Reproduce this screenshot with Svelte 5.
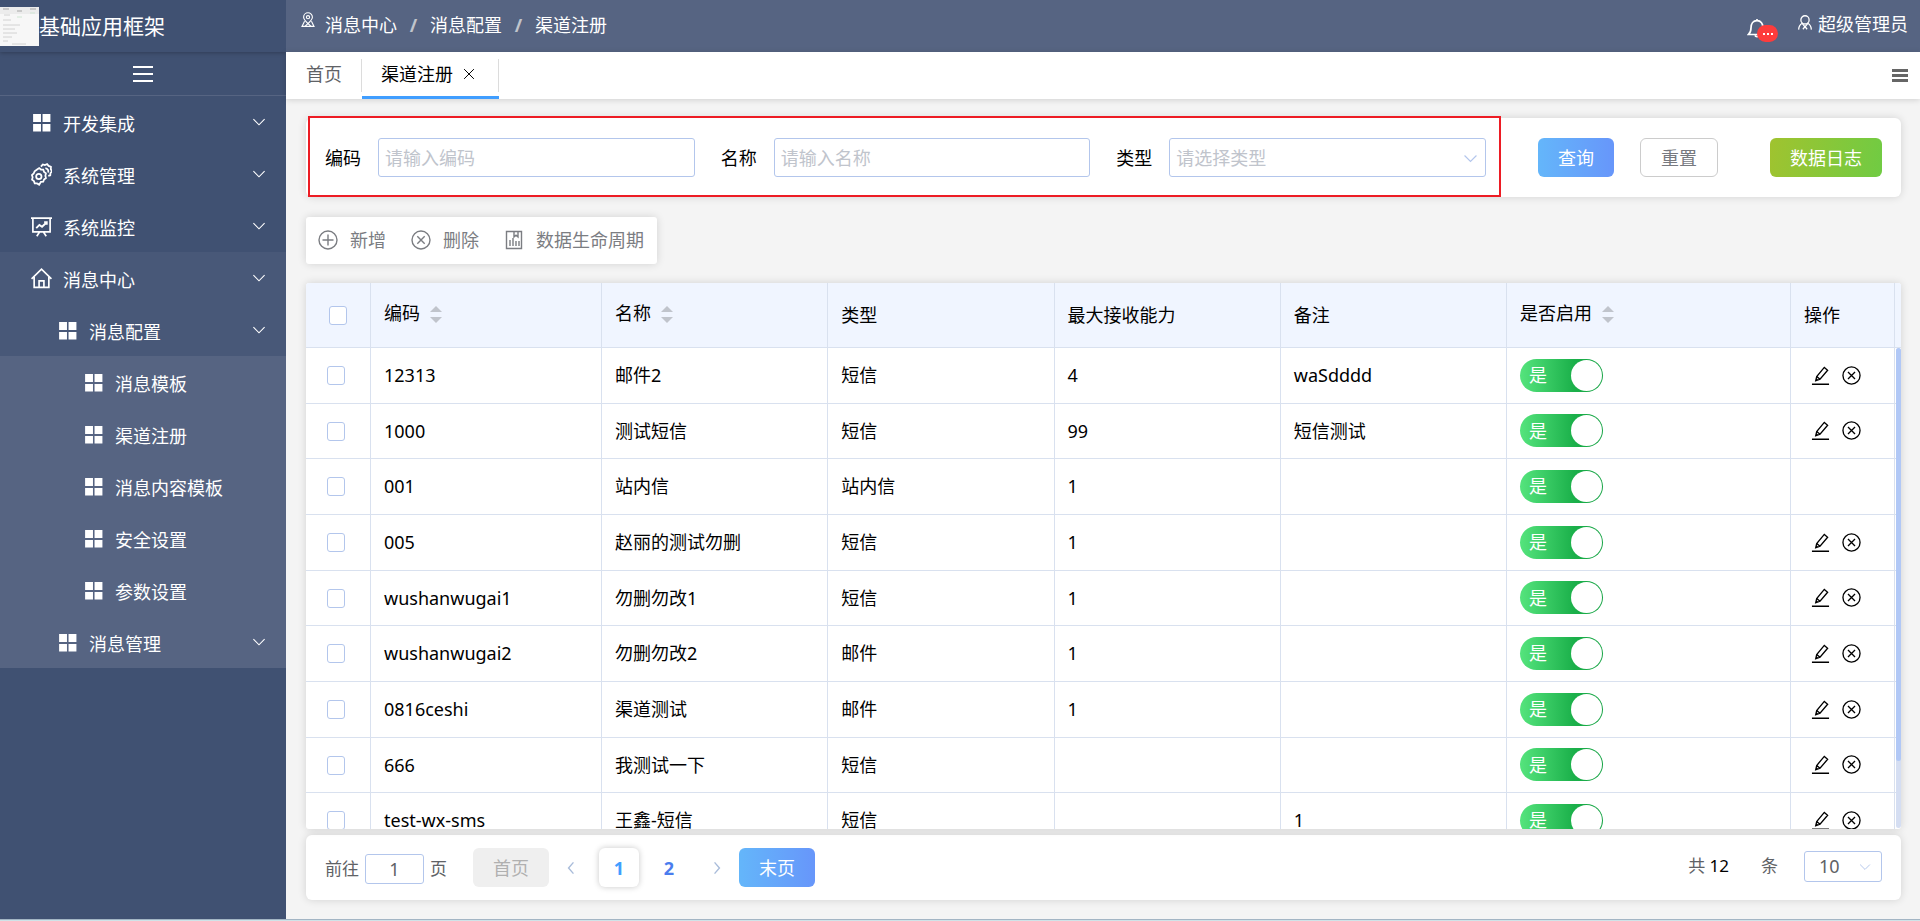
<script>
    const menus = [
        { text: '开发集成', icon: 'grid', level: 1, arrow: true },
        { text: '系统管理', icon: 'gear', level: 1, arrow: true },
        { text: '系统监控', icon: 'board', level: 1, arrow: true },
        { text: '消息中心', icon: 'home', level: 1, arrow: true, tone: 'open' },
        { text: '消息配置', icon: 'grid', level: 2, arrow: true, tone: 'open' },
        { text: '消息模板', icon: 'grid', level: 3, tone: 'sub' },
        { text: '渠道注册', icon: 'grid', level: 3, tone: 'sub' },
        { text: '消息内容模板', icon: 'grid', level: 3, tone: 'sub' },
        { text: '安全设置', icon: 'grid', level: 3, tone: 'sub' },
        { text: '参数设置', icon: 'grid', level: 3, tone: 'sub' },
        { text: '消息管理', icon: 'grid', level: 2, arrow: true, tone: 'sub' }
    ];

    let rows = $state([
        { code: '12313', name: '邮件2', type: '短信', max: '4', remark: 'waSdddd', on: true, ops: true },
        { code: '1000', name: '测试短信', type: '短信', max: '99', remark: '短信测试', on: true, ops: true },
        { code: '001', name: '站内信', type: '站内信', max: '1', remark: '', on: true, ops: false },
        { code: '005', name: '赵丽的测试勿删', type: '短信', max: '1', remark: '', on: true, ops: true },
        { code: 'wushanwugai1', name: '勿删勿改1', type: '短信', max: '1', remark: '', on: true, ops: true },
        { code: 'wushanwugai2', name: '勿删勿改2', type: '邮件', max: '1', remark: '', on: true, ops: true },
        { code: '0816ceshi', name: '渠道测试', type: '邮件', max: '1', remark: '', on: true, ops: true },
        { code: '666', name: '我测试一下', type: '短信', max: '', remark: '', on: true, ops: true },
        { code: 'test-wx-sms', name: '王鑫-短信', type: '短信', max: '', remark: '1', on: true, ops: true }
    ]);

    let query = $state({ code: '', name: '', type: '' });
    let page = $state(1);

    function reset() {
        query = { code: '', name: '', type: '' };
    }
</script>

{#snippet icon(name)}
    <svg class="icon {name}" viewBox={name === 'gear' ? '1 0.5 18 19.5' : '0 0 20 20'} fill="none" stroke="currentColor" stroke-width="1.4" aria-hidden="true">
        {#if name === 'grid'}
            <path fill="currentColor" stroke="none" d="M2 2h7.500v7.500H2zM11 2h7.500v7.500H11zM2 11.500h7.500v7H2zM11 11.500h7.500v7H11z" />
        {:else if name === 'gear'}
            <path stroke-width="1.500" d="M6.500 5.700l1.500-.9 1.500 1.200 2 .1.700 1.900 1.600 1.300-.5 2 .5 2-1.600 1.200-.7 1.900-2 .1L8 19l-1.800-1.100-2-.1-.7-1.900-1.600-1.300.5-2-.6-1.900 1.500-1.300.8-1.900z" />
            <circle cx="7.700" cy="12" r="2.300" stroke-width="1.500" />
            <path stroke-width="1.500" d="M9.500 3.500l1.600-1.900 1.800.6 1.900-.8 1.300 1.500 2 .8-.1 2 1 1.800-1.300 1.500-.2 2-1.700.5M13.300 4.800c2 .3 3 2 2.300 3.700" />
        {:else if name === 'board'}
            <path stroke-width="1.600" d="M0 2h20M1.800 2v13.200h16.400V2M8 15.500l-2.500 3.700M12 15.500l2.500 3.700" />
            <path stroke-width="1.800" d="M5 11.500l3-3 2.500 1.700L15 6M12.500 5.800H15v2.500" />
        {:else if name === 'home'}
            <path stroke-width="1.600" d="M.5 10.300L10 1.200l9.500 9.100M3 8.500v10h14v-10M7.700 18.500v-6.300h4.600v6.300" />
        {:else if name === 'down'}
            <path d="M3 6.500l7 7 7-7" />
        {:else if name === 'left'}
            <path stroke-width="2" d="M13.500 2L6.500 10l7 8" />
        {:else if name === 'right'}
            <path stroke-width="2" d="M6.500 2l7 8-7 8" />
        {:else if name === 'pin'}
            <path d="M10 14.500C6.500 11 4.500 9 4.500 6.500a5.500 5.500 0 0 1 11 0c0 2.500-2 4.500-5.500 8z" />
            <circle cx="10" cy="6.500" r="2" />
            <path d="M5.700 11.500L2.500 18h15l-3.200-6.500M6 18l4-3.500 4 3.500" />
        {:else if name === 'bell'}
            <path stroke-width="1.700" d="M10 1v1.500M1.500 16.500h17c-2-1.800-2.500-3.500-2.500-6.500 0-4.500-2-7.300-6-7.300S4 5.500 4 10c0 3-.5 4.700-2.500 6.500zM8 17.500c.5 1.500 3.500 1.500 4 0" />
        {:else if name === 'user'}
            <circle cx="10" cy="6.500" r="5.500" stroke-width="1.700" />
            <path stroke-width="1.700" d="M1.500 19.500c.3-4.500 2-7 4.700-8.500L10 16l3.800-5c2.700 1.500 4.400 4 4.700 8.500M7.200 19l2.800-3.500 2.800 3.500" />
        {:else if name === 'add'}
            <circle cx="10" cy="10" r="9" /><path d="M10 4.500v11M4.500 10h11" />
        {:else if name === 'remove'}
            <circle cx="10" cy="10" r="9" /><path d="M6.300 6.300l7.400 7.400M13.700 6.300l-7.400 7.400" />
        {:else if name === 'data'}
            <path d="M2.500 1.500h15v17h-15zM6 10v6M9 8v8M12 11v5M15 11v5M10 1.500v5.500l2-1.800 2 1.800V1.500" />
        {:else if name === 'edit'}
            <path d="M1 19.200h18M5 15.500l1-4.500L14 1.500l3.500 3-8 9.500zM6 11l3.500 3M5 15.500l1.500-2" />
        {:else if name === 'close'}
            <path d="M3 3l14 14M17 3L3 17" />
        {/if}
    </svg>
{/snippet}

{#snippet sorter(label)}
    <button class="sorter">{label}<span class="carets"><i class="up"></i><i class="dn"></i></span></button>
{/snippet}

<div class="layout">
    <div class="shell">
        <aside>
            <div class="brand">
                <svg class="logo" viewBox="0 0 39 39" aria-hidden="true">
                    <rect width="39" height="39" fill="#f7f7f7" />
                    <rect width="39" height="7" fill="#ececec" />
                    <path d="M3 2h6M17 4h5M30 2h6" stroke="#c9c9c9" stroke-width="2" />
                    <path d="M17 10h5M30 6h5" stroke="#cfe6d3" />
                    <path d="M4 8h6M3 13h8M3 18h17M3 22h12M3 26h14M3 30h9M3 34h5M12 37h14" stroke="#d2d2d2" />
                </svg>
                <span>基础应用框架</span>
            </div>
            <button class="collapse" aria-label="menu"><i></i><i></i><i></i></button>
            <nav>
                {#each menus as m}
                    <a href="#menu" class="menu level{m.level} {m.tone ?? ''}">
                        {@render icon(m.icon)}
                        <span>{m.text}</span>
                        {#if m.arrow}{@render icon('down')}{/if}
                    </a>
                {/each}
            </nav>
        </aside>

        <div class="main">
            <header>
                <div class="crumbs">
                    {@render icon('pin')}
                    <span>消息中心</span><b>/</b><span>消息配置</span><b>/</b><span>渠道注册</span>
                </div>
                <div class="account">
                    <button class="notice" aria-label="notice">{@render icon('bell')}<span class="badge"><i></i><i></i><i></i></span></button>
                    <button class="user">{@render icon('user')}超级管理员</button>
                </div>
            </header>

            <div class="tabs">
                <a href="#home" class="tab">首页</a>
                <div class="tab active">
                    <a href="#channel">渠道注册</a>
                    <button aria-label="close">{@render icon('close')}</button>
                </div>
                <button class="more" aria-label="tabs"><i></i><i></i><i></i></button>
            </div>

            <main>
                <section class="card filter">
                    <div class="fields">
                        <div class="field">
                            <label for="code">编码</label>
                            <input id="code" placeholder="请输入编码" bind:value={query.code} />
                        </div>
                        <div class="field">
                            <label for="name">名称</label>
                            <input id="name" placeholder="请输入名称" bind:value={query.name} />
                        </div>
                        <div class="field">
                            <label for="type">类型</label>
                            <div class="select">
                                <select id="type" class:empty={!query.type} bind:value={query.type}>
                                    <option value="">请选择类型</option>
                                    <option>短信</option>
                                    <option>邮件</option>
                                    <option>站内信</option>
                                </select>
                                {@render icon('down')}
                            </div>
                        </div>
                    </div>
                    <div class="actions">
                        <button class="btn primary">查询</button>
                        <button class="btn plain" onclick={reset}>重置</button>
                        <button class="btn success">数据日志</button>
                    </div>
                </section>

                <div class="card toolbar">
                    <button>{@render icon('add')}新增</button>
                    <button>{@render icon('remove')}删除</button>
                    <button>{@render icon('data')}数据生命周期</button>
                </div>

                <section class="card grid-card">
                    <table>
                        <colgroup>
                            <col class="c-check" /><col class="c-code" /><col /><col /><col /><col />
                            <col class="c-on" /><col class="c-ops" /><col class="c-gutter" />
                        </colgroup>
                        <thead>
                            <tr>
                                <th class="check"><input type="checkbox" aria-label="all" /></th>
                                <th>{@render sorter('编码')}</th>
                                <th>{@render sorter('名称')}</th>
                                <th>类型</th>
                                <th>最大接收能力</th>
                                <th>备注</th>
                                <th>{@render sorter('是否启用')}</th>
                                <th>操作</th>
                                <th class="gutter"></th>
                            </tr>
                        </thead>
                        <tbody>
                            {#each rows as row}
                                <tr>
                                    <td class="check"><input type="checkbox" aria-label={row.code} /></td>
                                    <td>{row.code}</td>
                                    <td>{row.name}</td>
                                    <td>{row.type}</td>
                                    <td>{row.max}</td>
                                    <td>{row.remark}</td>
                                    <td>
                                        <label class="switch" class:off={!row.on}>
                                            <input type="checkbox" role="switch" aria-checked={row.on} bind:checked={row.on} />
                                            <span>{row.on ? '是' : '否'}</span>
                                        </label>
                                    </td>
                                    <td>
                                        {#if row.ops}
                                            <div class="ops">
                                                <button aria-label="edit">{@render icon('edit')}</button>
                                                <button aria-label="remove">{@render icon('remove')}</button>
                                            </div>
                                        {/if}
                                    </td>
                                    <td class="gutter"></td>
                                </tr>
                            {/each}
                        </tbody>
                    </table>
                    <div class="scrollbar"><div class="thumb"></div></div>
                </section>

                <footer class="card">
                    <label class="goto">前往<input value={page} />页</label>
                    <button class="btn first" disabled>首页</button>
                    <button class="step prev" aria-label="prev">{@render icon('left')}</button>
                    <button class="page" class:current={page === 1} onclick={() => (page = 1)}>1</button>
                    <button class="page" class:current={page === 2} onclick={() => (page = 2)}>2</button>
                    <button class="step next" aria-label="next">{@render icon('right')}</button>
                    <button class="btn primary last">末页</button>
                    <div class="sizer">
                        <span>共 <em>12</em></span>
                        <label for="size">条</label>
                        <div class="select size">
                            <select id="size">
                                <option>10</option>
                                <option>20</option>
                                <option>50</option>
                            </select>
                            {@render icon('down')}
                        </div>
                    </div>
                </footer>
            </main>
        </div>
    </div>
</div>

<style>
    :global(body) { margin: 0; }

    .layout {
        min-height: 100vh; box-sizing: border-box;
        display: flex; flex-direction: column;
        border-bottom: 1px solid #cfe3e8;
        font-family: "Noto Sans", "Noto Sans CJK SC", sans-serif;
        font-size: 18px; line-height: 26px; color: #000;
    }
    .layout *, .layout *::before { box-sizing: border-box; }
    .shell { flex: 1; display: flex; border-bottom: 1px solid #a3b5c4; background: #f4f4f4; }
    button, input, select { font: inherit; color: inherit; }
    button { background: none; border: none; padding: 0; cursor: pointer; white-space: nowrap; }
    a { color: inherit; text-decoration: none; }
    .icon { width: 20px; height: 20px; flex-shrink: 0; display: block; }

    /* sidebar */
    aside { width: 286px; flex-shrink: 0; background: #405172; color: #fff; }
    .brand {
        height: 52px; display: flex; align-items: center;
        font-size: 21px; box-shadow: 0 1px 4px rgba(0, 0, 0, 0.25);
    }
    .logo { width: 39px; height: 39px; }
    .collapse {
        width: 100%; height: 44px; border-bottom: 1px solid #566482;
        display: flex; flex-direction: column; align-items: center; justify-content: center; gap: 5px;
    }
    .collapse i { width: 20px; height: 2px; background: #fff; }
    .menu {
        height: 52px; padding: 0 19px 0 31px;
        display: flex; align-items: center; gap: 11px;
    }
    .menu span { flex: 1; padding-top: 4px; }
    .menu .icon { width: 21px; height: 21px; }
    .menu .gear { height: 23px; }
    .menu .down { width: 16px; height: 16px; }
    .menu.level2 { padding-left: 57px; }
    .menu.level3 { padding-left: 83px; }
    .menu.open { background: #485878; }
    .menu.sub { background: #566482; }

    /* top bar */
    .main { flex: 1; min-width: 0; display: flex; flex-direction: column; }
    header {
        height: 52px; padding: 0 12px 0 14px; background: #566482; color: #fff;
        display: flex; align-items: center; justify-content: space-between;
    }
    .crumbs { display: flex; align-items: center; padding-bottom: 2px; }
    .crumbs .icon { width: 16px; height: 16px; margin: 0 9px 10px 0; }
    .crumbs b { width: 33px; text-align: center; color: #c0c4cc; }
    .account { display: flex; align-items: center; gap: 17px; }
    .notice { position: relative; width: 31px; height: 21px; margin-top: 4px; }
    .badge {
        position: absolute; left: 10px; top: 7px; width: 21px; height: 17px;
        border-radius: 9px; background: #fd3c3c;
        display: flex; align-items: center; justify-content: center; gap: 2px;
    }
    .badge i { width: 2px; height: 2px; background: #fff; margin-top: 2px; }
    .user { display: flex; align-items: center; gap: 3px; padding-bottom: 5px; }
    .user .icon { margin-top: 3px; }

    .tabs {
        height: 47px; padding-left: 20px; background: #fff; color: #606266;
        display: flex; box-shadow: 0 1px 6px rgba(0, 0, 0, 0.15);
    }
    .tab { height: 47px; display: flex; align-items: center; padding: 0 20px 3px 0; }
    .tab.active {
        position: relative; gap: 9px; padding: 0 23px 0 19px;
        color: #000; border-bottom: 3px solid #409eff;
    }
    .tab.active::before {
        content: ""; position: absolute; left: -1px; right: 0; top: 7px; height: 33px;
        border: solid #dcdcdc; border-width: 0 1px;
    }
    .tab button { position: relative; }
    .tab .icon { width: 14px; height: 14px; }
    .more {
        margin-left: auto; padding: 0 12px;
        display: flex; flex-direction: column; justify-content: center; gap: 2px;
    }
    .more i { width: 16px; height: 3px; background: #666; }

    main { flex: 1; padding: 19px 19px 19px 20px; display: flex; flex-direction: column; align-items: stretch; }
    .card { background: #fff; border-radius: 6px; box-shadow: 0 0 8px rgba(0, 0, 0, 0.14); }

    /* filter */
    .filter { display: flex; align-items: center; padding: 0 19px 0 2px; height: 79px; }
    .fields {
        flex: 1; align-self: stretch; margin-top: -2px; padding: 2px 13px 0 15px;
        border: 2px solid #ed1c24; display: flex; align-items: center; gap: 26px;
    }
    .field { flex: 1; min-width: 0; display: flex; align-items: center; }
    .field label { width: 53px; flex-shrink: 0; }
    .field input, .select select {
        width: 100%; min-width: 0; height: 39px; padding: 1px 6px 0;
        border: 1px solid #b3c6ec; border-radius: 3px; background: #fff; outline: none;
    }
    .field input::placeholder { color: #c0c4cc; opacity: 1; }
    .select { position: relative; flex: 1; }
    .select select { appearance: none; display: block; }
    .select .empty { color: #c0c4cc; }
    .select .icon { position: absolute; right: 7px; top: 12px; width: 17px; height: 17px; color: #b3c6ec; pointer-events: none; }
    .actions { display: flex; gap: 26px; margin-left: 37px; }
    .btn { height: 39px; padding: 0 20px; border-radius: 6px; color: #fff; }
    .primary { background: linear-gradient(90deg, #64b6fa, #6796fa); }
    .plain { border: 1px solid #ccc; color: #77797f; }
    .success { background: linear-gradient(100deg, #a0c32f, #70cb43); margin-left: 26px; }

    .toolbar {
        align-self: flex-start; height: 47px; margin: 20px 0 19px; padding: 0 13px 1px 12px;
        display: flex; gap: 25px; border-radius: 3px; color: #7b7d82;
    }
    .toolbar button { display: flex; align-items: center; gap: 12px; }

    /* table */
    .grid-card { position: relative; flex: 1 0 545px; height: 0; overflow: hidden; border-radius: 3px; }
    table { width: 100%; table-layout: fixed; border-collapse: separate; border-spacing: 0; }
    .c-check { width: 65px; }
    .c-code { width: 231px; }
    .c-on { width: 284px; }
    .c-ops { width: 104px; }
    .c-gutter { width: 6px; }
    th, td {
        padding: 0 12px 1px 13px; text-align: left; font-weight: normal;
        border: solid #d9e1ef; border-width: 0 1px 1px 0;
    }
    th { height: 65px; background: #f0f5ff; }
    td { height: 56px; }
    tbody tr:nth-child(3n + 2) td { height: 55px; }
    .check { padding: 0; }
    td.check { padding-right: 4px; }
    .check input {
        appearance: none; width: 18px; height: 19px; margin: 0 auto; display: block;
        border: 1px solid #b3c6ec; border-radius: 3px; background: #fff;
    }
    .gutter { padding: 0; border-right: none; }
    .sorter { display: flex; align-items: center; padding-bottom: 3px; }
    .carets { margin-left: 10px; padding-top: 2px; display: flex; flex-direction: column; gap: 5px; }
    .carets i { border: 6px solid transparent; }
    .carets .up { border-top: 0; border-bottom-color: #c0c4cc; }
    .carets .dn { border-bottom: 0; border-top-color: #c0c4cc; }
    .switch {
        display: flex; align-items: center; justify-content: space-between; flex-direction: row-reverse;
        width: 83px; height: 33px; padding: 0 1px 0 9px; border-radius: 17px;
        background: linear-gradient(90deg, #55e47d, #1bb04a 65%, #17a445); color: #fff; cursor: pointer;
    }
    .switch input { appearance: none; width: 31px; height: 31px; margin: 0; border-radius: 50%; background: #fff; }
    .switch.off { flex-direction: row; padding: 0 9px 0 1px; background: #c0c4cc; }
    .ops { display: flex; gap: 12px; padding-left: 7px; }
    .ops .icon { width: 19px; height: 19px; }
    .scrollbar { position: absolute; right: 0; top: 65px; bottom: 1px; width: 5px; background: #d5def2; border-radius: 3px; }
    .thumb { height: 86%; background: #b1c8f6; border-radius: 3px; }

    /* pagination */
    footer { height: 65px; margin-top: 6px; padding: 0 19px; display: flex; align-items: center; color: #606266; }
    .goto { display: flex; align-items: center; gap: 6px; margin-right: 26px; padding-top: 3px; font-size: 17px; }
    .goto input {
        width: 59px; height: 30px; padding: 0; text-align: center; font-size: 18px;
        border: 1px solid #b3c6ec; border-radius: 3px; background: #fff;
    }
    .first { background: #efefef; color: #b0b0b0; }
    .step { color: #a9bcda; }
    .prev { padding: 0 21px 0 15px; }
    .next { padding: 0 15px 0 21px; }
    .step .icon { width: 14px; height: 14px; }
    .page { width: 40px; height: 39px; border-radius: 6px; font-weight: bold; color: #4a7dee; }
    .page + .page { margin-left: 10px; }
    .page.current { color: #409eff; box-shadow: 0 0 6px rgba(0, 0, 0, 0.22); }
    .sizer { margin-left: auto; padding-bottom: 3px; display: flex; align-items: center; font-size: 17px; }
    .sizer span { margin-right: 32px; }
    .sizer em { font-style: normal; color: #000; }
    .select.size { flex: none; width: 78px; margin-left: 26px; }
    .size select { height: 31px; padding: 0 14px; font-size: 18px; }
    .select.size .icon { right: 10px; top: 9px; width: 14px; height: 14px; }
</style>
